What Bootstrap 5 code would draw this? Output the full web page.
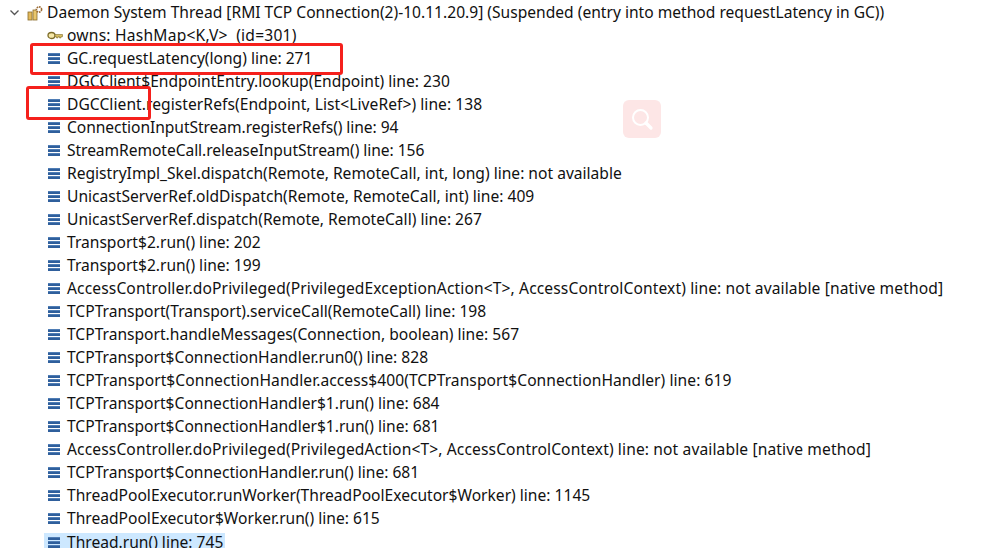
<!DOCTYPE html>
<html lang="en"><head><meta charset="utf-8"><title>Debug stack</title>
<link href="https://cdn.jsdelivr.net/npm/bootstrap@5.3.0/dist/css/bootstrap.min.css" rel="stylesheet">
<style>
html,body{height:548px;overflow:hidden;background:#fff}
body{font-family:"Noto Sans","Liberation Sans",sans-serif;font-size:15.6px;color:#111;position:relative}
.tree{padding:1px 0 0 0;margin:0;list-style:none}
.trow{height:23px;line-height:23px;white-space:nowrap;display:flex;align-items:center}
.lvl0{padding-left:9px}
.lvl1{padding-left:47px}
.wide{letter-spacing:.12px}
.loose{letter-spacing:.06px}
.tight{letter-spacing:-.06px}
.spaced{letter-spacing:.22px}
.ico{flex:none;width:13px;height:13px;margin-right:7px}
.keyico{flex:none;width:16px;height:13px;margin-right:4px}
.chev{flex:none;width:11px;height:11px;margin-right:7px}
.cog{flex:none;width:16px;height:16px;margin-right:4px}
.sel{background:#cde8ff;margin-left:-3px;padding:0 2px 0 3px;display:flex;align-items:center;height:19px;margin-top:2px}
.mark-box{position:absolute;border:3px solid #f5201c;border-radius:3px}
.b1{left:30px;top:43px;width:313px;height:32px}
.b2{left:26px;top:86px;width:125px;height:34px}
.srch{position:absolute;left:623px;top:100px;width:38px;height:38px;border-radius:6px;background:#fde6e6;display:flex;align-items:center;justify-content:center}
</style></head><body>
<svg width="0" height="0" class="position-absolute"><defs><symbol id="frame" viewBox="0 0 13 13"><path d="M1 1h12v1H1zM1 5h12v1H1zM1 9h12v1H1z" fill="#4f7db5"/><path d="M1 2h12v2H1zM1 6h12v2H1zM1 10h12v2H1z" fill="#2f5f9c"/></symbol></defs></svg>
<ul class="tree">
<li class="trow lvl0"><svg class="chev" viewBox="0 0 11 11"><path d="M1.5 3.5 5.5 7.5 9.5 3.5" fill="none" stroke="#555" stroke-width="1.3"/></svg><svg class="cog" viewBox="0 0 16 16"><rect x="1" y="7" width="4" height="8" fill="#e3b95b" stroke="#8a6d2c" stroke-width=".8"/><rect x="6" y="5" width="4" height="10" fill="#e9c66d" stroke="#8a6d2c" stroke-width=".8"/><circle cx="12" cy="4.5" r="2.6" fill="#fff" stroke="#9a6a32" stroke-width="1.6" stroke-dasharray="1.6 .8"/></svg>Daemon System Thread [RMI TCP Connection(2)-10.11.20.9] (Suspended (entry into method requestLatency in GC))</li>
<li class="trow lvl1 spaced"><svg class="keyico" viewBox="0 0 16 13"><ellipse cx="4.5" cy="6.5" rx="3.5" ry="3" fill="#f5e7a8" stroke="#7d6c2a" stroke-width="1.3"/><path d="M8 5.5h7.5v2.2H14v1.2h-1.5V7.7H11v1.2H9.5V7.7H8z" fill="#d8bd60" stroke="#7d6c2a" stroke-width=".6"/></svg>owns: HashMap&lt;K,V&gt;&nbsp; (id=301)</li>
<li class="trow lvl1"><svg class="ico"><use href="#frame"/></svg>GC.requestLatency(long) line: 271</li>
<li class="trow lvl1"><svg class="ico"><use href="#frame"/></svg>DGCClient$EndpointEntry.lookup(Endpoint) line: 230</li>
<li class="trow lvl1 loose"><svg class="ico"><use href="#frame"/></svg>DGCClient.registerRefs(Endpoint, List&lt;LiveRef&gt;) line: 138</li>
<li class="trow lvl1 tight"><svg class="ico"><use href="#frame"/></svg>ConnectionInputStream.registerRefs() line: 94</li>
<li class="trow lvl1 tight"><svg class="ico"><use href="#frame"/></svg>StreamRemoteCall.releaseInputStream() line: 156</li>
<li class="trow lvl1"><svg class="ico"><use href="#frame"/></svg>RegistryImpl_Skel.dispatch(Remote, RemoteCall, int, long) line: not available</li>
<li class="trow lvl1"><svg class="ico"><use href="#frame"/></svg>UnicastServerRef.oldDispatch(Remote, RemoteCall, int) line: 409</li>
<li class="trow lvl1"><svg class="ico"><use href="#frame"/></svg>UnicastServerRef.dispatch(Remote, RemoteCall) line: 267</li>
<li class="trow lvl1"><svg class="ico"><use href="#frame"/></svg>Transport$2.run() line: 202</li>
<li class="trow lvl1"><svg class="ico"><use href="#frame"/></svg>Transport$2.run() line: 199</li>
<li class="trow lvl1 wide"><svg class="ico"><use href="#frame"/></svg>AccessController.doPrivileged(PrivilegedExceptionAction&lt;T&gt;, AccessControlContext) line: not available [native method]</li>
<li class="trow lvl1"><svg class="ico"><use href="#frame"/></svg>TCPTransport(Transport).serviceCall(RemoteCall) line: 198</li>
<li class="trow lvl1"><svg class="ico"><use href="#frame"/></svg>TCPTransport.handleMessages(Connection, boolean) line: 567</li>
<li class="trow lvl1"><svg class="ico"><use href="#frame"/></svg>TCPTransport$ConnectionHandler.run0() line: 828</li>
<li class="trow lvl1 loose"><svg class="ico"><use href="#frame"/></svg>TCPTransport$ConnectionHandler.access$400(TCPTransport$ConnectionHandler) line: 619</li>
<li class="trow lvl1"><svg class="ico"><use href="#frame"/></svg>TCPTransport$ConnectionHandler$1.run() line: 684</li>
<li class="trow lvl1"><svg class="ico"><use href="#frame"/></svg>TCPTransport$ConnectionHandler$1.run() line: 681</li>
<li class="trow lvl1 wide"><svg class="ico"><use href="#frame"/></svg>AccessController.doPrivileged(PrivilegedAction&lt;T&gt;, AccessControlContext) line: not available [native method]</li>
<li class="trow lvl1"><svg class="ico"><use href="#frame"/></svg>TCPTransport$ConnectionHandler.run() line: 681</li>
<li class="trow lvl1"><svg class="ico"><use href="#frame"/></svg>ThreadPoolExecutor.runWorker(ThreadPoolExecutor$Worker) line: 1145</li>
<li class="trow lvl1"><svg class="ico"><use href="#frame"/></svg>ThreadPoolExecutor$Worker.run() line: 615</li>
<li class="trow lvl1"><span class="sel"><svg class="ico"><use href="#frame"/></svg>Thread.run() line: 745</span></li>
</ul>
<div class="mark-box b1"></div>
<div class="mark-box b2"></div>
<div class="srch"><svg width="24" height="24" viewBox="0 0 24 24"><circle cx="10.5" cy="10.5" r="7.5" fill="none" stroke="#fff" stroke-width="2"/><path d="M16 16l5 5" stroke="#fff" stroke-width="3.2" stroke-linecap="round"/></svg></div>
</body></html>
